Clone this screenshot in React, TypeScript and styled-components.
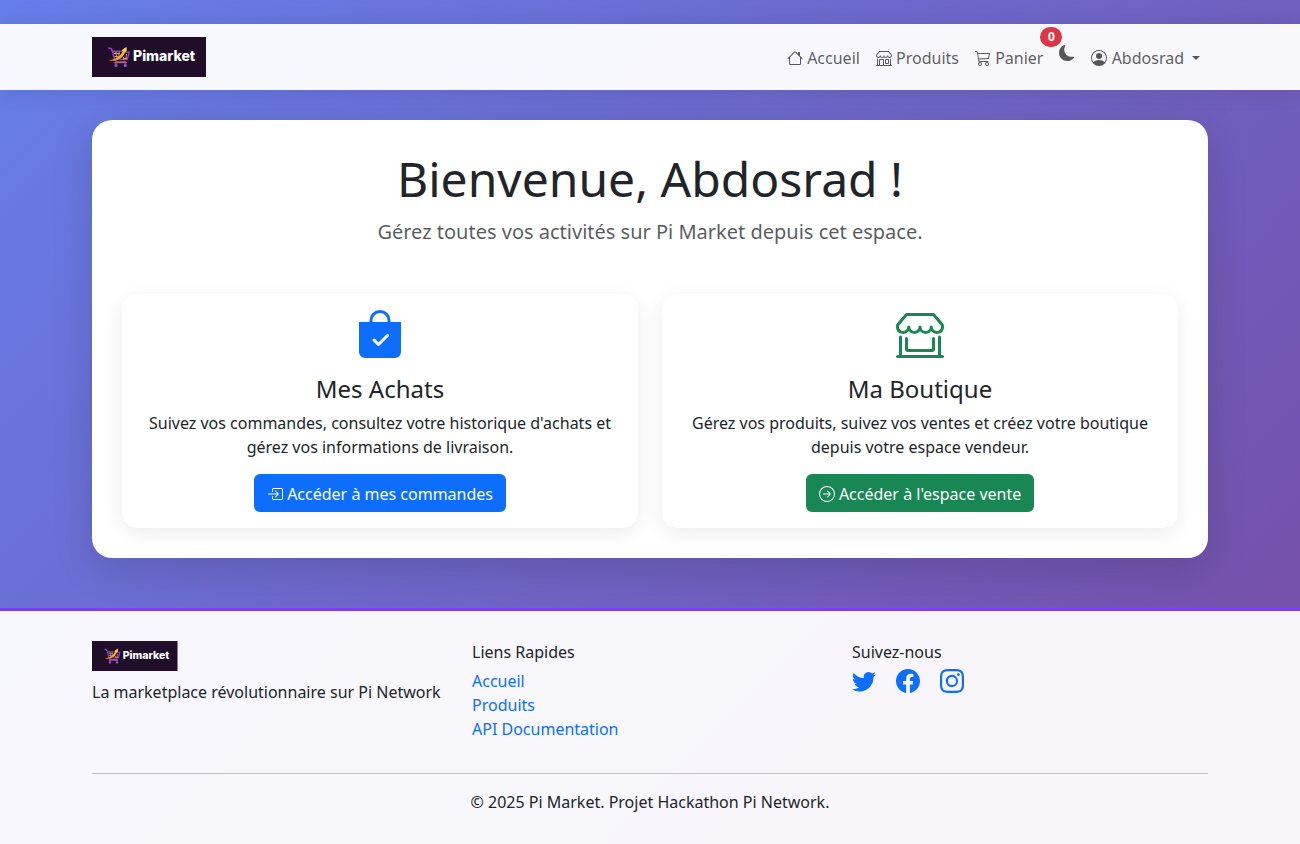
import React from "react";
import styled, { createGlobalStyle } from "styled-components";
import {
  BsArrowRightCircle,
  BsBagCheckFill,
  BsBoxArrowInRight,
  BsCart3,
  BsFacebook,
  BsHouse,
  BsInstagram,
  BsMoonFill,
  BsPersonCircle,
  BsShop,
  BsShopWindow,
  BsTwitter,
} from "react-icons/bs";

const GlobalStyle = createGlobalStyle`
  *, *::before, *::after { box-sizing: border-box; }
  body {
    margin: 0;
    min-height: 100vh;
    font: 16px/24px "Noto Sans", "Liberation Sans", sans-serif;
    color: #212529;
    background: linear-gradient(135deg, #667eea 0%, #764ba2 100%);
  }
  h1, h2, h3, p, ul { margin: 0; padding: 0; font-weight: 400; }
  a { text-decoration: none; }
`;

const Page = styled.div`
  display: flex;
  flex-direction: column;
  min-height: 100vh;
  padding-top: 24px;
`;

const Container = styled.div`
  width: 100%;
  max-width: 1140px;
  margin: 0 auto;
  padding: 0 12px;
`;

const Header = styled.header`
  padding: 8px 0;
  background: rgba(255, 255, 255, 0.95);
  box-shadow: 0 2px 20px rgba(0, 0, 0, 0.1);
`;

const NavRow = styled(Container)`
  display: flex;
  align-items: center;
  justify-content: space-between;
  flex-wrap: wrap;
`;

const Brand = styled.a`
  display: block;
  padding: 5px 0;
`;

const LogoSvg = styled.svg`
  display: block;
`;

const LogoText = styled.text`
  font: 800 14px Inter, "Open Sans", sans-serif;
  fill: #fff;
`;

const NavList = styled.ul`
  display: flex;
  list-style: none;
`;

const NavLink = styled.a`
  display: block;
  position: relative;
  padding: 9px 8px 7px;
  color: rgba(0, 0, 0, 0.65);

  svg { vertical-align: -2px; }
`;

const Badge = styled.span`
  position: absolute;
  top: 0;
  left: 100%;
  transform: translate(-50%, -50%);
  min-width: 22px;
  padding: 4px;
  border-radius: 20px;
  background: #dc3545;
  color: #fff;
  font-size: 12px;
  font-weight: 700;
  line-height: 12px;
  text-align: center;
`;

const ThemeButton = styled.button`
  display: block;
  padding: 8px;
  border: 0;
  background: none;
  color: rgba(0, 0, 0, 0.65);
  font-size: 16px;
  cursor: pointer;

  svg { display: block; }
`;

const MenuButton = styled.button`
  padding: 9px 8px 7px;
  border: 0;
  background: none;
  color: rgba(0, 0, 0, 0.65);
  font: inherit;
  cursor: pointer;

  svg { vertical-align: -2px; }

  &::after {
    content: "";
    display: inline-block;
    margin-left: 8px;
    vertical-align: 4px;
    border-top: 4px solid;
    border-right: 4px solid transparent;
    border-left: 4px solid transparent;
  }
`;

const Main = styled.main`
  flex: 1;
  padding: 30px 0 50px;
`;

const Panel = styled.section`
  padding: 30px;
  border-radius: 20px;
  background: #fff;
  box-shadow: 0 10px 40px rgba(0, 0, 0, 0.15);
`;

const Intro = styled.div`
  margin-bottom: 46px;
  text-align: center;
`;

const Title = styled.h1`
  margin-bottom: 8px;
  font-size: 48px;
  line-height: 58px;
`;

const Lead = styled.p`
  font-size: 20px;
  line-height: 32px;
  color: rgba(33, 37, 41, 0.75);
`;

const Cards = styled.div`
  display: grid;
  grid-template-columns: repeat(2, 1fr);
  gap: 24px;

  @media (max-width: 768px) { grid-template-columns: 1fr; }
`;

const Card = styled.article<{ $accent: string }>`
  display: flex;
  flex-direction: column;
  align-items: center;
  padding: 16px;
  border-radius: 15px;
  background: #fff;
  box-shadow: 0 5px 20px rgba(0, 0, 0, 0.08);
  text-align: center;

  > svg { color: ${(p) => p.$accent}; }
`;

const CardTitle = styled.h2`
  margin: 16px 0 8px;
  font-size: 24px;
  line-height: 29px;
`;

const CardText = styled.p`
  margin-bottom: 15px;
`;

const CardButton = styled.a<{ $accent: string }>`
  padding: 8px 13px 6px;
  border-radius: 6px;
  background: ${(p) => p.$accent};
  color: #fff;

  svg { vertical-align: -2px; }
`;

const Footer = styled.footer`
  padding: 30px 0;
  border-top: 3px solid #7b3ff2;
  background: rgba(255, 255, 255, 0.95);
`;

const FooterColumns = styled.div`
  display: grid;
  grid-template-columns: repeat(3, 1fr);
  gap: 24px;
  padding-bottom: 32px;
  border-bottom: 1px solid rgba(33, 37, 41, 0.25);

  @media (max-width: 768px) { grid-template-columns: 1fr; }
`;

const Tagline = styled.p`
  margin-top: 9px;
  white-space: nowrap;
`;

const FooterTitle = styled.h3`
  margin-bottom: 5px;
  font-size: 16px;
  line-height: 23px;
`;

const LinkList = styled.ul`
  list-style: none;
`;

const FooterLink = styled.a`
  color: #0d6efd;
`;

const Socials = styled.div`
  display: flex;
  gap: 20px;

  svg { display: block; }
`;

const Copyright = styled.p`
  margin-top: 16px;
  text-align: center;
`;

const BLUE = "#0d6efd";
const GREEN = "#198754";

function Logo({ height, id }: { height: number; id: string }) {
  return (
    <LogoSvg height={height} viewBox="0 0 114 40" role="img" aria-label="Pimarket">
      <defs>
        <linearGradient id={id} x1="0" y1="1" x2="1" y2="0">
          <stop offset="0" stopColor="#e58a2c" />
          <stop offset="1" stopColor="#ffd257" />
        </linearGradient>
      </defs>
      <rect width="114" height="40" fill="#200d29" />
      <g fill="none" stroke="#8a45b8" strokeLinecap="round" strokeLinejoin="round">
        <path d="M16.700 11l2.600.6 1.200 3 2 7.500" strokeWidth="1.600" />
        <path d="M20.500 14.300h8M35.300 15.500l2-.7-2 7.800H28" strokeWidth="1.400" />
        <path d="M22.500 25.700h12M24 26v2M33.500 26v2" strokeWidth="1.300" />
      </g>
      <path
        d="M22 16.500h6M22.500 19.500h5M24 15l.7 5.500M27 15v5M34.500 17l-.5 5M31.500 20v3M31 21.500h4M23 25h11"
        stroke="#e39a55"
        strokeWidth="1"
        fill="none"
      />
      <path
        d="M16.500 23.200c5.500-.3 12-3.200 14.300-9.200l-1.800.4c1.500-1.800 3.500-3.300 5.600-4.300.3 2 .2 4-.5 6l-1-1.200c-2.300 6.600-8.500 10.300-16.600 8.300z"
        fill={`url(#${id})`}
      />
      <circle cx="24" cy="28.500" r="1.600" fill="#9a55c4" />
      <circle cx="33.300" cy="28.500" r="1.600" fill="#9a55c4" />
      <LogoText x="41" y="23.500">Pimarket</LogoText>
    </LogoSvg>
  );
}

export default function App() {
  return (
    <>
      <GlobalStyle />
      <Page>
        <Header>
          <NavRow as="nav">
            <Brand href="#"><Logo height={40} id="logo-header" /></Brand>
            <NavList>
              <li><NavLink href="#"><BsHouse /> Accueil</NavLink></li>
              <li><NavLink href="#"><BsShop /> Produits</NavLink></li>
              <li><NavLink href="#"><BsCart3 /> Panier<Badge>0</Badge></NavLink></li>
              <li><ThemeButton type="button" aria-label="Mode sombre"><BsMoonFill /></ThemeButton></li>
              <li><MenuButton type="button" aria-haspopup="menu"><BsPersonCircle /> Abdosrad</MenuButton></li>
            </NavList>
          </NavRow>
        </Header>

        <Main>
          <Container>
            <Panel>
              <Intro>
                <Title>Bienvenue, Abdosrad !</Title>
                <Lead>Gérez toutes vos activités sur Pi Market depuis cet espace.</Lead>
              </Intro>
              <Cards>
                <Card $accent={BLUE}>
                  <BsBagCheckFill size={48} />
                  <CardTitle>Mes Achats</CardTitle>
                  <CardText>
                    Suivez vos commandes, consultez votre historique d'achats et gérez vos informations de livraison.
                  </CardText>
                  <CardButton href="#" $accent={BLUE}><BsBoxArrowInRight /> Accéder à mes commandes</CardButton>
                </Card>
                <Card $accent={GREEN}>
                  <BsShopWindow size={48} />
                  <CardTitle>Ma Boutique</CardTitle>
                  <CardText>
                    Gérez vos produits, suivez vos ventes et créez votre boutique depuis votre espace vendeur.
                  </CardText>
                  <CardButton href="#" $accent={GREEN}><BsArrowRightCircle /> Accéder à l'espace vente</CardButton>
                </Card>
              </Cards>
            </Panel>
          </Container>
        </Main>

        <Footer>
          <Container>
            <FooterColumns>
              <div>
                <Logo height={30} id="logo-footer" />
                <Tagline>La marketplace révolutionnaire sur Pi Network</Tagline>
              </div>
              <div>
                <FooterTitle>Liens Rapides</FooterTitle>
                <LinkList>
                  <li><FooterLink href="#">Accueil</FooterLink></li>
                  <li><FooterLink href="#">Produits</FooterLink></li>
                  <li><FooterLink href="#">API Documentation</FooterLink></li>
                </LinkList>
              </div>
              <div>
                <FooterTitle>Suivez-nous</FooterTitle>
                <Socials>
                  <FooterLink href="#" aria-label="Twitter"><BsTwitter size={24} /></FooterLink>
                  <FooterLink href="#" aria-label="Facebook"><BsFacebook size={24} /></FooterLink>
                  <FooterLink href="#" aria-label="Instagram"><BsInstagram size={24} /></FooterLink>
                </Socials>
              </div>
            </FooterColumns>
            <Copyright>© 2025 Pi Market. Projet Hackathon Pi Network.</Copyright>
          </Container>
        </Footer>
      </Page>
    </>
  );
}
